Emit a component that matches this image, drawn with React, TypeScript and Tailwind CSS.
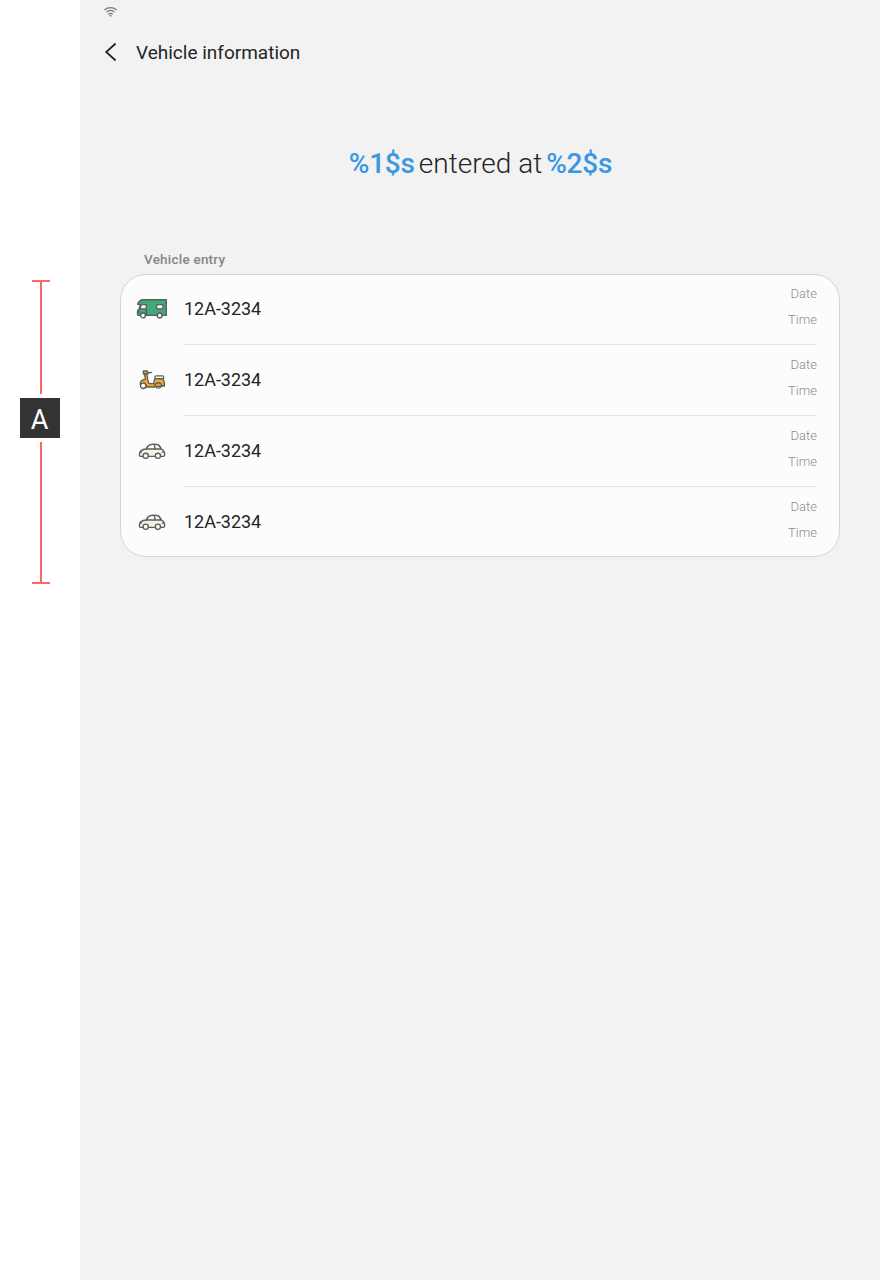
import type { ReactNode } from "react";

function Camper() {
  return (
    <svg width="32" height="32" viewBox="0 0 32 32" fill="none" stroke="#5c5c5c" strokeWidth="1.35" strokeLinejoin="round">
      <path d="M2 10.2C3.2 8 4.8 6.7 7 6.7H30.3V22.3H2.2Q1.5 22.3 1.5 21.5V18.4Q1.5 17 2.8 16.5L4.6 11.6H2.3Q1.2 11.4 2 10.2Z" fill="#43a878" />
      <path d="M5.4 11.6H10.2V15.8H4Z" fill="#fcfcfc" />
      <path d="M10.4 16V22M1.5 18.8H4" />
      <rect x="20.7" y="11.6" width="6.2" height="4.2" rx=".6" fill="#fcfcfc" />
      <circle cx="7" cy="22.4" r="2.4" fill="#fcfcfc" />
      <circle cx="23.7" cy="22.4" r="2.4" fill="#fcfcfc" />
    </svg>
  );
}

function Scooter() {
  return (
    <svg width="32" height="32" viewBox="0 0 32 32" fill="none" stroke="#5c5c5c" strokeWidth="1.3" strokeLinejoin="round" strokeLinecap="round">
      <path d="M8.4 10.2L9.5 15.3C6 15.5 4 17.7 4.1 20.5L8 19.3Q10.4 20.3 10.4 23H18.8Q18.8 19 22.2 18.8Q25.4 19 25.9 22H28.4Q28.8 17 26.5 14.7H19Q17.9 15.4 17.8 19.6H14Q12.6 19.4 12.2 18L10.9 10Z" fill="#f2a928" />
      <circle cx="7.2" cy="21.8" r="2.7" fill="#fcfcfc" />
      <path d="M19.8 22.4A2.7 2.4 0 0 0 25 22.4" fill="#fcfcfc" />
      <path d="M18.8 22.4A3.5 3.5 0 0 1 25.8 22.4Z" fill="#f2a928" />
      <path d="M7.3 7H11.3L12.3 9.5L7.5 10Z" fill="#f2a928" />
      <path d="M11.7 9L15.6 8.3" />
      <rect x="18.9" y="11.9" width="8.8" height="2.8" rx="1.2" fill="#fcfcfc" />
    </svg>
  );
}

function Car() {
  return (
    <svg width="32" height="32" viewBox="0 0 32 32" fill="none" stroke="#5c5c5c" strokeWidth="1.35" strokeLinejoin="round" strokeLinecap="round">
      <path d="M4.2 21.3Q3.4 21.1 3.4 19.5Q3.6 14.4 10.2 14Q12.2 9.5 16.6 9.4H19.6Q23.6 9.5 25.3 14Q28.7 15.8 28.7 19.4Q28.7 21.1 27.6 21.3Z" fill="#f5f2e3" />
      <path d="M10.3 14Q12.3 9.5 16.6 9.4H19.6Q23.4 9.5 24.8 14Z" fill="#fcfcfc" />
      <path d="M18.3 9.6L19.2 13.9M26.3 17.1H28M4.2 17.1H5.4" />
      <circle cx="9.7" cy="20.8" r="2.6" fill="#fcfcfc" />
      <circle cx="21.9" cy="20.8" r="2.6" fill="#fcfcfc" />
    </svg>
  );
}

function Entry({ icon, last }: { icon: ReactNode; last?: boolean }) {
  return (
    <li className={`flex pl-[15px] pr-[23px] ${last ? "h-[68px]" : "h-[71px]"}`}>
      <div className="w-12 shrink-0 pt-[18px]">{icon}</div>
      <div className={`flex h-[70px] flex-1 border-b ${last ? "border-transparent" : "border-[#e2e2e2]"}`}>
        <span className="flex-1 pt-[20px] text-[18px] leading-7 tracking-[-0.03px] text-[#252525]">12A-3234</span>
        <div className="-mr-px flex flex-col pt-[6px] text-right text-[13px] leading-[26px] font-light text-[#8c8c8c]">
          <span>Date</span>
          <span>Time</span>
        </div>
      </div>
    </li>
  );
}

export default function App() {
  return (
    <div className="flex h-[1280px] w-[880px] overflow-hidden bg-white font-['Roboto',sans-serif]">
      <aside className="flex w-20 shrink-0 flex-col pt-[280px]">
        <div className="ml-8 h-0.5 w-[18px] bg-[#ff6666]" />
        <div className="ml-10 h-28 w-0.5 bg-[#ff6666]" />
        <div className="my-1 ml-5 flex h-10 w-10 items-center justify-center bg-[#333333] pt-[4px] pr-px text-[27px] leading-none text-white">A</div>
        <div className="ml-10 h-[140px] w-0.5 bg-[#ff6666]" />
        <div className="ml-8 h-0.5 w-[18px] bg-[#ff6666]" />
      </aside>
      <main className="flex-1 bg-[#f2f2f2]">
        <div className="h-6 pt-1 pl-[23px]">
          <svg width="15" height="15" viewBox="0 0 15 15" fill="none" stroke="#777777" strokeWidth="1.2">
            <path d="M1.3 5.9Q7.5 1.2 13.7 5.9M3.3 8.1Q7.5 4.7 11.7 8.1M5.2 10.2Q7.5 8.4 9.8 10.2" />
            <circle cx="7.5" cy="11.7" r=".9" fill="#666666" stroke="none" />
          </svg>
        </div>
        <header className="flex h-14 items-center pl-6">
          <svg width="16" height="20" viewBox="0 0 16 20" fill="none" stroke="#252525" strokeWidth="1.8">
            <path d="M11.6 1.5L2.2 10L11.6 18.5" />
          </svg>
          <h1 className="pt-[2px] pl-4 text-[19px] text-[#252525]">Vehicle information</h1>
        </header>
        <p className="flex h-[168px] items-center justify-center gap-[4px] pl-px text-[28px] font-light whitespace-nowrap text-[#252525]">
          <span className="font-medium tracking-[-0.2px] text-[#3a97e3]">%1$s</span>
          <span>entered at</span>
          <span className="font-medium tracking-[-0.2px] text-[#3a97e3]">%2$s</span>
        </p>
        <h2 className="h-[26px] pl-16 text-[13.5px] leading-[22px] font-medium tracking-[0.22px] text-[#868686]">Vehicle entry</h2>
        <ul className="mx-10 h-[283px] overflow-hidden rounded-[26px] border border-[#d6d6d6] bg-[#fcfcfc]">
          <Entry icon={<Camper />} />
          <Entry icon={<Scooter />} />
          <Entry icon={<Car />} />
          <Entry icon={<Car />} last />
        </ul>
      </main>
    </div>
  );
}
